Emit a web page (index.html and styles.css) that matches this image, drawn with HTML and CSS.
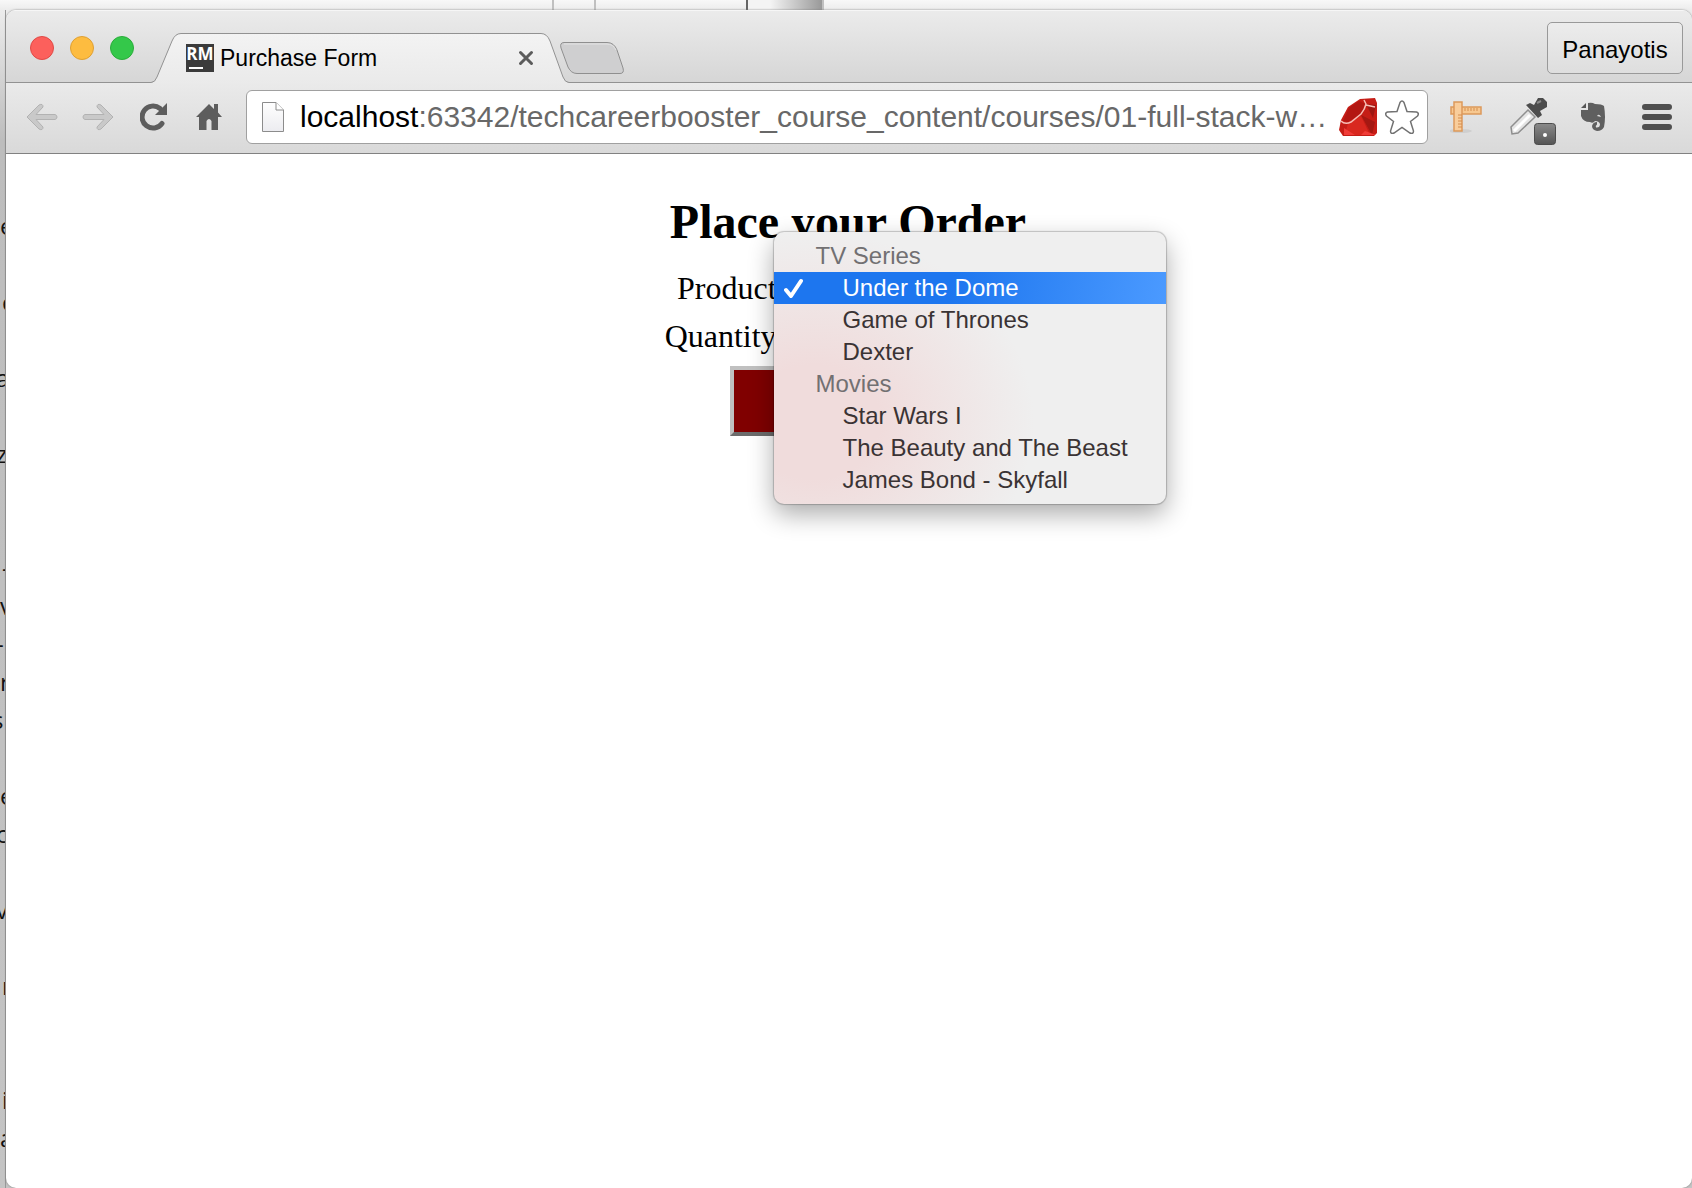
FILE: index.html
```html
<!DOCTYPE html>
<html lang="en">
<head>
<meta charset="utf-8">
<title>Purchase Form</title>
<link rel="stylesheet" href="styles.css">
</head>
<body>
<div class="backdrop-top"><span class="pane pane-a"></span><span class="pane pane-b"></span><span class="pane pane-c"></span><span class="pane pane-d"></span></div>
<div class="backdrop-side" aria-hidden="true">
  <span class="in">e</span><span></span><span class="far">c</span><span></span><span class="out">a</span><span></span><span class="out">z</span><span></span><span></span>
  <span class="far">-</span><span class="in">v</span><span class="out">-</span><span>r</span><span class="cut">s</span><span></span><span>e</span><span class="out">c</span><span></span><span class="out">v</span><span></span><span class="far">r</span><span></span><span></span><span class="far">i</span><span class="in">a</span>
</div>
<div class="window">
  <header class="titlebar">
    <div class="lights">
      <button class="light red" aria-label="Close window"></button>
      <button class="light yellow" aria-label="Minimize window"></button>
      <button class="light green" aria-label="Zoom window"></button>
    </div>
    <div class="tab">
      <svg class="tab-shape" viewBox="0 0 420 51" aria-hidden="true">
        <defs><linearGradient id="tabfill" x2="0" y2="1"><stop offset="0" stop-color="#f3f3f3"/><stop offset="1" stop-color="#eaeaea"/></linearGradient></defs>
        <path d="M0 51V49.500H1Q5 49.500 7 44L22 8Q25 .5 31 .5H391Q397 .5 400 8L413 44Q415 49.500 419 49.500H420V51Z" fill="url(#tabfill)"/>
        <path d="M0 49.500H1Q5 49.500 7 44L22 8Q25 .5 31 .5H391Q397 .5 400 8L413 44Q415 49.500 419 49.500H420" fill="none" stroke="#929292"/>
      </svg>
      <span class="favicon">RM</span>
      <span class="tab-title">Purchase Form</span>
      <button class="tab-close" aria-label="Close tab"><svg width="16" height="16" viewBox="0 0 16 16"><path d="M2.500 2.500l11 11M13.500 2.500l-11 11" stroke="#5b5b5b" stroke-width="3" stroke-linecap="round"/></svg></button>
    </div>
    <button class="new-tab" aria-label="New tab">
      <svg width="64" height="32" viewBox="0 0 64 32"><path d="M4 .5H47Q54 .5 57 8L63 26Q64.500 31.500 60 31.500H17Q11 31.500 8 25L1 6Q-.5 .5 4 .5Z" fill="#cfcfd0" stroke="#8f8f8f"/><path d="M4 2H47Q53 2 56 8" fill="none" stroke="#e4e4e4"/></svg>
    </button>
    <button class="profile">Panayotis</button>
  </header>
  <nav class="toolbar">
    <button class="tool" aria-label="Back"><svg width="32" height="28" viewBox="0 0 32 28"><path d="M1 14L13 2Q17 0 17 4L10 11.500H29Q31 12 31 14T29 16.500H10L17 24Q17 28 13 26Z" fill="#c9c9c9" stroke="#b2b2b2"/></svg></button>
    <button class="tool" aria-label="Forward"><svg width="32" height="28" viewBox="0 0 32 28"><path d="M31 14L19 2Q15 0 15 4L22 11.500H3Q1 12 1 14T3 16.500H22L15 24Q15 28 19 26Z" fill="#c9c9c9" stroke="#b2b2b2"/></svg></button>
    <button class="tool reload" aria-label="Reload"><svg width="28" height="28" viewBox="0 0 28 28"><path d="M22 20.500A11 11 0 1 1 20 5.500" fill="none" stroke="#5d5d5d" stroke-width="5" stroke-linecap="round"/><path d="M27 0V12H15Z" fill="#5d5d5d"/></svg></button>
    <button class="tool" aria-label="Home"><svg width="26" height="28" viewBox="0 0 26 28"><path d="M0 14L13 1L18 6V1H22V9.500L26 14H22V27H15.500V18Q13 14 10.500 18V27H3V14Z" fill="#5d5d5d"/></svg></button>
    <div class="omnibox">
      <svg width="22" height="32" viewBox="0 0 22 32" aria-hidden="true"><defs><linearGradient id="pg" x2="0" y2="1"><stop offset="0" stop-color="#fff"/><stop offset="1" stop-color="#ececf0"/></linearGradient></defs><path d="M.5 1.500H14L21.500 9V30.500H.5Z" fill="url(#pg)" stroke="#8c8c8c"/><path d="M14 1.500V9H21.500" fill="#fff" stroke="#8c8c8c"/></svg>
      <a class="url" href="#order"><b>localhost</b>:63342/techcareerbooster_course_content/courses/01-full-stack-w…</a>
      <svg width="38" height="38" viewBox="0 0 38 38" aria-hidden="true"><path d="M2 22L9 9L21 1L36 0L38 5V35L35 38H4L0 32Z" fill="#c51d16"/><path d="M4 23L10 10L20 3L27 6L22 16L9 24Z" fill="#b31712"/><path d="M27 6L37 7L34 20Z" fill="#9e1712"/><path d="M22 17L36 24L33 37Z" fill="#a51812"/><path d="M9 25L22 18L31 37H6Z" fill="#d9281f"/><path d="M5 30L16 37H5ZM26 33L37 37H22Z" fill="#f03c38"/><path d="M2 23Q6 27 12 24L22 16Q26 11 27 6L25 2M27 7L36 9" fill="none" stroke="#f6bcb4" stroke-width="1.500"/></svg>
      <button class="star" aria-label="Bookmark this page"><svg width="34" height="34" viewBox="0 0 34 34"><path d="M15 2.500Q17 -.5 19 2.500L22 11.500L31.500 12Q34.500 13 32.500 16L25.500 21.500L28.500 31Q28.500 34.500 25 33L17 27.500L9 33Q5.500 34.500 5.500 31L8.500 21.500L1.500 16Q-.5 13 2.500 12L12 11.500Z" fill="#fff" stroke="#727272" stroke-width="1.500"/></svg></button>
    </div>
    <button class="tool ruler" aria-label="Page Ruler"><svg width="32" height="32" viewBox="0 0 32 32"><ellipse cx="10" cy="30" rx="12" ry="2" fill="#cfcfcf"/><path d="M1 6H31V13H1Z" fill="#f7c890" stroke="#dc995b" stroke-width="1.500"/><path d="M4 1H12V30H4Z" fill="#f9cd9b" stroke="#dc995b" stroke-width="1.500"/><path d="M15 7v3M18 7v3M21 7v3M24 7v3M27 7v3M8 14h4M8 17h4M8 20h4M8 23h4M8 26h4" stroke="#d48d4e"/></svg></button>
    <button class="tool picker" aria-label="Color picker"><svg width="48" height="48" viewBox="0 0 48 48"><defs><linearGradient id="bd" x2="0" y2="1"><stop offset="0" stop-color="#8a8a8a"/><stop offset="1" stop-color="#555"/></linearGradient></defs><path d="M1 30L18 13L25 20L8 36L2 37Z" fill="#e4e4e4" stroke="#8f8f8f" stroke-width="1.500"/><path d="M4 34L20 18" stroke="#fff" stroke-width="3"/><path d="M16 8L20 6L24 8L28 1H33L37 5V10L30 14L32 18L28 21Z" fill="#4c4c4c"/><path d="M27 6L31 4" stroke="#8a8a8a" stroke-width="2"/><rect x="24.500" y="26.500" width="21" height="21" rx="3" fill="url(#bd)" stroke="#4d4d4d"/><circle cx="35" cy="38" r="2" fill="#fff"/></svg></button>
    <button class="tool" aria-label="Evernote"><svg width="26" height="30" viewBox="0 0 26 30"><path d="M8 1Q12 0 15 2Q22 2 24 4Q26 15 24 25Q22 29 17 29Q12 28 12 24Q13 20 17 20V22.500Q15 24 16 25.500Q20 26 20 22Q19 19 15 19Q13 22 10 20Q3 20 1 14V8H8Z" fill="#5f5f5f"/><path d="M1 6L6 1V6Z" fill="#555"/><path d="M17 14Q19 11 21 15Z" fill="#ddd"/></svg></button>
    <button class="tool menu-button" aria-label="Menu"><svg width="30" height="26" viewBox="0 0 30 26"><path d="M3 3H27M3 13H27M3 23H27" stroke="#4f4f4f" stroke-width="6" stroke-linecap="round"/></svg></button>
  </nav>
  <main class="page">
    <form class="order" id="order">
      <h1>Place your Order</h1>
      <div class="fields">
        <label for="product">Product:</label>
        <div class="picker-anchor">
          <select id="product"><optgroup label="TV Series"><option>Under the Dome</option></optgroup></select>
          <div class="popup" role="listbox" aria-label="Product">
            <div class="group">TV Series</div>
            <div class="item selected" role="option" aria-selected="true"><svg class="check" width="20" height="22" viewBox="0 0 20 22"><path d="M2 12L7 18L17 3" fill="none" stroke="#fff" stroke-width="4" stroke-linecap="round" stroke-linejoin="round"/></svg>Under the Dome</div>
            <div class="item" role="option">Game of Thrones</div>
            <div class="item" role="option">Dexter</div>
            <div class="group">Movies</div>
            <div class="item" role="option">Star Wars I</div>
            <div class="item" role="option">The Beauty and The Beast</div>
            <div class="item" role="option">James Bond - Skyfall</div>
          </div>
        </div>
        <label for="quantity">Quantity:</label>
        <input id="quantity" type="text">
      </div>
      <button class="submit" type="button" aria-label="Submit order"></button>
    </form>
  </main>
</div>
</body>
</html>
```
FILE: styles.css
```css
* { box-sizing: border-box; }

body {
  margin: 0;
  min-height: 100vh;
  display: grid;
  grid-template-columns: 6px minmax(0, 1fr);
  grid-template-rows: 10px 1fr;
  background: linear-gradient(#f4f4f4, #ececec 10px, #bdbdbd 140px, #c4c4c4);
  font-family: "Liberation Sans", Arial, sans-serif;
  color: #000;
}

button { font: inherit; color: inherit; border: 0; padding: 0; background: none; }
svg { display: block; flex: none; }

/* Windows showing behind the browser */
.backdrop-top {
  grid-column: 1 / -1;
  display: flex;
  padding-left: 552px;
  background: linear-gradient(#f8f8f8, #ececec);
}
.pane { border-left: 2px solid #c0c0c0; }
.pane-a { width: 42px; }
.pane-b { width: 152px; }
.pane-c { width: 76px; border-color: #666; background: linear-gradient(90deg, #f4f4f4 30%, #999); }
.pane-d { width: 2px; }

.backdrop-side {
  display: flex;
  flex-direction: column;
  padding-top: 197px;
  overflow: hidden;
  color: #111;
  border-right: 1px solid #989898;
  font: 24px/38px "Open Sans", sans-serif;
}
.backdrop-side span { height: 38px; flex: none; }
.in { text-indent: 0; }
.far { text-indent: 2px; }
.out { text-indent: -4px; }
.cut { text-indent: -8px; }

/* Browser window */
.window {
  display: flex;
  flex-direction: column;
  overflow: hidden;
  background: #fff;
  border-radius: 10px;
  box-shadow: 0 0 2px #777;
}

.titlebar {
  display: flex;
  align-items: flex-end;
  height: 73px;
  padding: 0 9px 0 24px;
  border-top: 1px solid #f6f6f6;
  border-bottom: 1px solid #929292;
  background: linear-gradient(#ebebeb, #d6d6d6);
}
.lights { display: flex; gap: 16px; padding-bottom: 22px; }
.light { width: 24px; height: 24px; border-radius: 50%; border: 1px solid; }
.red { background: #fc605c; border-color: #e04a46; }
.yellow { background: #fdbc40; border-color: #dfa033; }
.green { background: #34c84a; border-color: #2aad3a; }

.tab {
  position: relative;
  display: flex;
  align-items: center;
  width: 420px;
  height: 51px;
  margin: 0 0 -2px 16px;
  padding: 0 36px 2px;
}
.tab-shape { position: absolute; inset: 0; width: 100%; height: 100%; }
.favicon, .tab-title, .tab-close { position: relative; }
.favicon {
  width: 28px;
  height: 28px;
  background: #3b3b3b;
  color: #fff;
  font: bold 17px/20px "Open Sans", sans-serif;
  text-align: center;
}
.favicon::after { content: ""; position: absolute; left: 3px; bottom: 3px; width: 14px; height: 2px; background: #fff; }
.tab-title { flex: 1; padding-left: 6px; font-size: 23px; line-height: 28px; }

.new-tab { margin: 0 0 8px -10px; position: relative; }
.profile {
  height: 52px;
  width: 136px;
  margin: 0 0 8px auto;
  padding-top: 4px;
  border: 1px solid #999;
  border-radius: 5px;
  background: linear-gradient(#ececec, #dedede);
  font-size: 24px;
}

.toolbar {
  display: flex;
  align-items: center;
  gap: 24px;
  height: 71px;
  padding: 0 20px 2px;
  border-bottom: 1px solid #818181;
  background: linear-gradient(#eaeaea, #d9d9d9);
}
.tool { flex: none; }
.reload { margin-left: 2px; }
.reload + .tool { margin-left: 4px; }
.omnibox {
  flex: 1;
  min-width: 0;
  display: flex;
  align-items: center;
  height: 54px;
  padding: 0 8px 0 15px;
  border: 1px solid #a0a0a0;
  border-radius: 6px;
  background: #fff;
}
.url {
  flex: 1;
  min-width: 0;
  padding-left: 16px;
  overflow: hidden;
  white-space: nowrap;
  color: #686868;
  font-size: 30px;
  line-height: 40px;
  text-decoration: none;
}
.url b { color: #000; font-weight: normal; }
.star { margin-left: 8px; }
.ruler { margin-left: -2px; }
.picker { margin: 8px 0 0 4px; }
.toolbar .picker + .tool { margin-left: -2px; }
.toolbar .menu-button { margin-left: 12px; }

/* Order form */
.page {
  flex: 1;
  padding: 40px 2px 0 0;
  font: 32px/36px "Liberation Serif", "Times New Roman", serif;
}
.order { display: flex; flex-direction: column; align-items: center; }
h1 { margin: 0; font-size: 48px; line-height: 56px; }
.fields {
  display: grid;
  grid-template-columns: 121px 238px;
  gap: 12px 8px;
  padding: 20px 0 12px;
  text-align: right;
}
.fields select, .fields input { display: block; width: 230px; height: 32px; font-size: 22px; }
.picker-anchor { position: relative; text-align: left; }
.submit {
  width: 236px;
  height: 70px;
  border: 4px outset #c0c0c0;
  background: maroon;
}

/* Open list of products */
.popup {
  position: absolute;
  top: -38px;
  left: -20px;
  width: 392px;
  padding: 8px 0;
  border-radius: 10px;
  background:
    radial-gradient(ellipse 220px 190px at 40px 190px, #f0dcdc 30%, #f0dcdc00),
    #efefef;
  box-shadow: 0 0 1px 1px #0003, 0 10px 26px #0005;
  color: #3a3334;
  font: 24px/32px "Liberation Sans", Arial, sans-serif;
}
.group { padding-left: 42px; color: #727072; }
.item { position: relative; padding-left: 69px; }
.selected { color: #fff; background: linear-gradient(100deg, #1d76ef 45%, #4b9aff); }
.check { position: absolute; left: 10px; top: 6px; }
```
